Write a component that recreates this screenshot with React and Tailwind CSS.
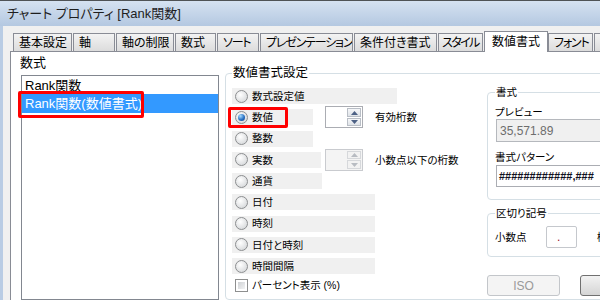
import React from 'react'

const TABS = [
  { label: '基本設定', w: 'w-[59px]' },
  { label: '軸', w: 'w-[42px]' },
  { label: '軸の制限', w: 'w-[58px]' },
  { label: '数式', w: 'w-[41px]' },
  { label: 'ソート', w: 'w-[42px]', tight: true },
  { label: 'プレゼンテーション', w: 'w-[93px]', tight: true },
  { label: '条件付き書式', w: 'w-[83px]' },
  { label: 'スタイル', w: 'w-[45px]', tight: true, narrow: true },
  { label: '数値書式', w: 'w-[64px]', active: true },
  { label: 'フォント', w: 'w-[45px]', tight: true },
  { label: 'レイアウト', w: 'w-[80px]', tight: true },
]

const ROWS = [
  { label: '数式設定値', w: 'w-[165px]' },
  { label: '数値', w: 'w-[81px]', checked: true, spin: 'on', note: '有効桁数', mark: true },
  { label: '整数', w: 'w-[81px]' },
  { label: '実数', w: 'w-[89px]', spin: 'off', note: '小数点以下の桁数' },
  { label: '通貨', w: 'w-[90px]' },
  { label: '日付', w: 'w-[143px]' },
  { label: '時刻', w: 'w-[143px]' },
  { label: '日付と時刻', w: 'w-[143px]' },
  { label: '時間間隔', w: 'w-[143px]' },
]

function Radio({ checked }) {
  return (
    <span className="w-[13px] h-[13px] shrink-0 rounded-full border border-[#8c8e90] bg-[radial-gradient(circle_at_40%_35%,#ffffff,#dadcde_75%)] flex items-center justify-center">
      {checked && <span className="w-[7px] h-[7px] rounded-full bg-[radial-gradient(circle_at_35%_30%,#a8dcff,#2a72c4_55%,#123f80)]" />}
    </span>
  )
}

function Spin({ disabled }) {
  const tri = disabled ? '#b8bcc2' : '#4d6185'
  return (
    <div className={`w-[38px] h-[22px] shrink-0 flex border ${disabled ? 'border-[#c9cbcf] bg-[#f4f4f4]' : 'border-[#abadb3] bg-white'}`}>
      <div className="flex-1" />
      <div className="w-[16px] flex flex-col gap-px p-px">
        {[0, 1].map(i => (
          <div key={i} className={`flex-1 flex items-center justify-center border ${disabled ? 'border-[#d6d8db] bg-[#f2f2f2]' : 'border-[#b9bec6] bg-gradient-to-b from-[#f6f7f9] to-[#dfe3e8]'}`}>
            <svg width="7" height="4" viewBox="0 0 7 4">
              {i === 0 ? <polygon points="0,4 3.5,0 7,4" fill={tri} /> : <polygon points="0,0 3.5,4 7,0" fill={tri} />}
            </svg>
          </div>
        ))}
      </div>
    </div>
  )
}

export default function App() {
  return (
    <div className="w-[600px] h-[300px] overflow-hidden bg-[#f0f0f0] flex flex-col text-black font-['Liberation_Sans','Noto_Sans_CJK_JP',sans-serif] [font-feature-settings:'palt']">
      <div className="h-[26px] shrink-0 border-t border-[#4f5356] bg-gradient-to-b from-[#d5e2f1] to-[#b4c8e1] pl-[7px] flex items-center text-[13px] leading-none text-[#1e1e1e]">
        チャート プロパティ [Rank関数]
      </div>

      <div className="flex flex-1 min-h-0">
        <div className="w-[3px] shrink-0 bg-[#b9cce4]" />
        <div className="flex-1 flex flex-col pl-[7px] pt-[5px] min-w-0">
          <div className="h-[20px] shrink-0 flex items-end pl-[3px]">
            {TABS.map(t => (
              <div
                key={t.label}
                className={`${t.w} shrink-0 flex items-center text-[12px] leading-none whitespace-nowrap overflow-hidden border-t border-l border-r border-[#898c95] ${
                  t.tight ? 'tracking-[-1.2px] text-[11.5px]' : ''
                } ${t.narrow ? 'pl-[3px] tracking-[-1.6px]' : 'pl-[5px]'} ${
                  t.active ? 'relative z-10 h-[21px] -mb-px bg-white pl-[7px]' : 'h-[18px] bg-gradient-to-b from-[#f3f3f3] to-[#dcdcdc] mr-px'
                }`}
              >
                {t.label}
              </div>
            ))}
          </div>

          <div className="flex-1 flex bg-white border-t border-l border-[#898c95] min-h-0">
            <div className="flex flex-col pl-[10px] pt-[3px] shrink-0">
              <div className="text-[13px] leading-[16px] -ml-px">数式</div>
              <div className="relative mt-[4px] w-[198px] flex-1 border border-[#828790] bg-white">
                <div className="h-[18px] pl-[3px] flex items-center text-[13px] leading-none">Rank関数</div>
                <div className="h-[19px] pl-[3px] flex items-center text-[13px] leading-none bg-[#3399ff] text-white">Rank関数(数値書式)</div>
                <div className="absolute left-[-4px] top-[15px] w-[126px] h-[27px] border-[3px] border-[#ff0000] rounded-[2px]" />
              </div>
            </div>

            <fieldset className="ml-[6px] mt-[13px] w-[420px] shrink-0 border border-[#d5dfe5] rounded-[4px] pl-[6px] flex">
              <legend className="px-[1px] text-[12.5px] leading-[16px]">数値書式設定</legend>
              <div className="flex w-full">
                <div className="w-[255px] shrink-0 flex flex-col pt-[4.4px] text-[10.5px] leading-none">
                  {ROWS.map(r => {
                    const strip = (
                      <div className={`${r.w} h-[16px] bg-[#f0f0f0] flex items-center pl-[3px] gap-[4px]`}>
                        <Radio checked={r.checked} />
                        <span>{r.label}</span>
                      </div>
                    )
                    return (
                      <div key={r.label} className="relative h-[21.25px] flex items-center">
                        {r.spin ? (
                          <>
                            <div className="w-[93px] shrink-0">{strip}</div>
                            <Spin disabled={r.spin === 'off'} />
                            <span className="ml-[12px] whitespace-nowrap">{r.note}</span>
                          </>
                        ) : strip}
                        {r.mark && <div className="absolute left-[-4px] top-0 w-[60px] h-[21px] border-[3px] border-[#ff0000] rounded-[2px]" />}
                      </div>
                    )
                  })}
                  <div className="h-[17px] flex items-center pl-[3px] gap-[4px]">
                    <span className="w-[13px] h-[13px] shrink-0 border border-[#8e8f8f] bg-white p-[2px]">
                      <span className="block w-full h-full bg-gradient-to-br from-[#cfd1d4] to-[#f2f3f4]" />
                    </span>
                    <span>パーセント表示 (%)</span>
                  </div>
                </div>

                <div className="w-[200px] shrink-0 flex flex-col text-[10.5px] leading-none">
                  <fieldset className="mt-[4px] border border-[#d5dfe5] rounded-[4px] pl-[7px] pb-[12px] flex flex-col">
                    <legend className="px-[1px] leading-[14px]">書式</legend>
                    <div className="mt-[6px] leading-[14px]">プレビュー</div>
                    <div className="ml-px h-[23px] border border-[#b5b8bd] bg-[#f0f0f0] flex items-center pl-[3px] text-[12px] text-[#6d6d6d] font-['Liberation_Sans',sans-serif]">35,571.89</div>
                    <div className="mt-[8px] leading-[14px]">書式パターン</div>
                    <div className="ml-px mt-px h-[22px] border border-[#abadb3] bg-white flex items-center pl-[2px] text-[11px] font-bold text-[#101020] font-['Liberation_Sans',sans-serif] whitespace-nowrap">############,###</div>
                  </fieldset>

                  <fieldset className="mt-[6px] border border-[#d5dfe5] rounded-[4px] pl-[7px] pb-[8px] flex flex-col">
                    <legend className="px-[1px] leading-[14px]">区切り記号</legend>
                    <div className="mt-[6px] h-[22px] flex items-center">
                      <span className="w-[51px]">小数点</span>
                      <div className="w-[31px] h-[22px] border border-[#c5c8cd] rounded-[2px] bg-white flex items-center pl-[10px] text-[12px] text-[#a0102a]">.</div>
                      <span className="ml-[20px]">桁区切り</span>
                    </div>
                  </fieldset>

                  <div className="mt-[18px] flex gap-[20px]">
                    <div className="w-[73px] h-[21px] border border-[#c3c6ca] rounded-[3px] bg-[#f4f4f4] flex items-center justify-center text-[12px] text-[#9a9a9a] font-['Liberation_Sans',sans-serif]">ISO</div>
                    <div className="w-[73px] h-[21px] border border-[#707070] rounded-[3px] bg-gradient-to-b from-[#f2f2f2] to-[#d5d5d5]" />
                  </div>
                </div>
              </div>
            </fieldset>
          </div>
        </div>
      </div>
    </div>
  )
}
